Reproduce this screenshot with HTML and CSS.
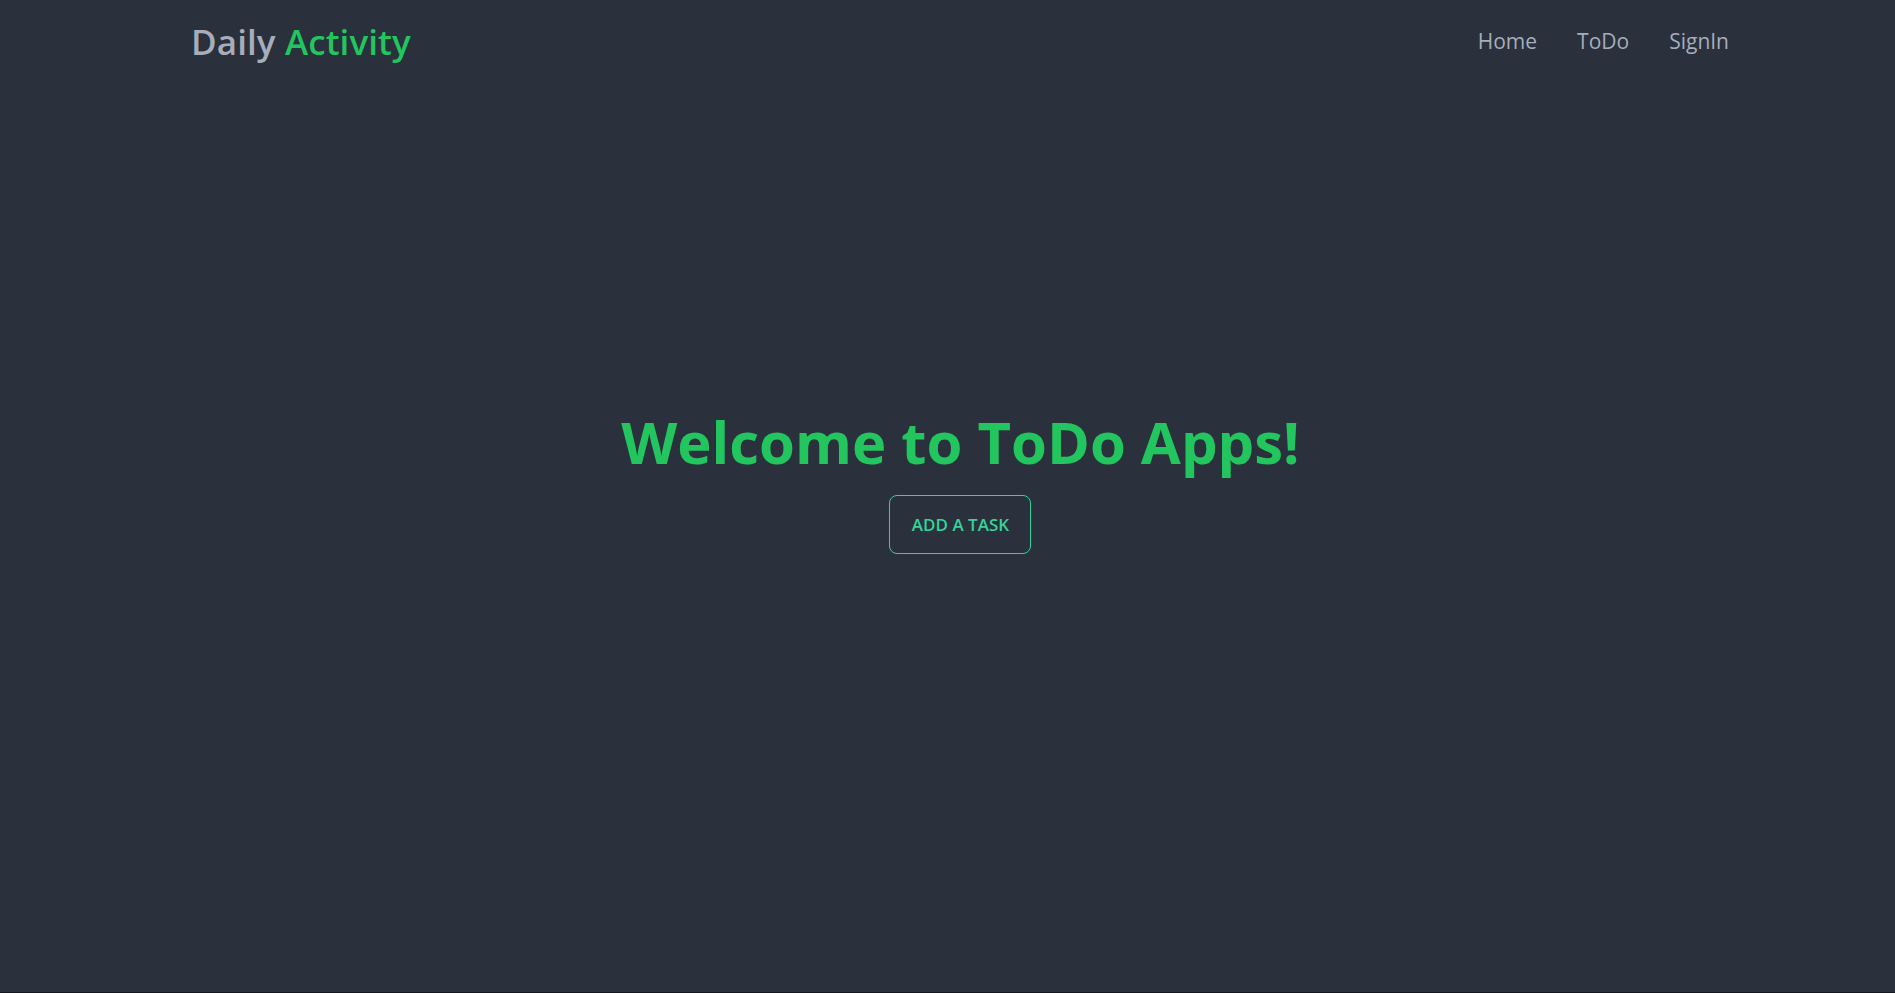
FILE: index.html
```html
<!DOCTYPE html>
<html lang="en">
<head>
<meta charset="utf-8">
<title>Daily Activity</title>
<link rel="stylesheet" href="styles.css">
</head>
<body>
<div class="page">
  <header class="navbar">
    <a class="brand" href="#"><span class="brand-daily">Daily</span> <span class="brand-activity">Activity</span></a>
    <nav class="menu">
      <a href="#" class="menu-item">Home</a>
      <a href="#" class="menu-item">ToDo</a>
      <a href="#" class="menu-item">SignIn</a>
    </nav>
  </header>
  <main class="hero">
    <div class="hero-content">
      <h1 class="hero-title">Welcome to ToDo Apps!</h1>
      <button class="btn-outline">ADD A TASK</button>
    </div>
  </main>
</div>
</body>
</html>
```

FILE: styles.css
```css
html, body {
  margin: 0;
  padding: 0;
}
body {
  background: #2a303c;
  font-family: "Open Sans", "Noto Sans", sans-serif;
  color: #a6adbb;
}
.page {
  height: 992px;
  border-bottom: 1px solid #14171d;
  display: flex;
  flex-direction: column;
}
.navbar {
  box-sizing: border-box;
  padding: 12px 166px 0 191px;
  display: flex;
  justify-content: space-between;
  align-items: center;
  height: 70px;
}
.brand {
  text-decoration: none;
  font-size: 35px;
  font-weight: 600;
  letter-spacing: 0.1px;
}
.brand-daily { color: #a6adbb; }
.brand-activity { color: #22c55e; }
.menu {
  display: flex;
  gap: 40px;
}
.menu-item {
  color: #a6adbb;
  text-decoration: none;
  font-size: 21px;
}
.hero {
  flex: 1;
  display: flex;
  justify-content: center;
  align-items: flex-start;
  padding-top: 340px;
  padding-left: 26px;
}
.hero-content {
  display: flex;
  flex-direction: column;
  align-items: center;
  gap: 21px;
}
.hero-title {
  margin: 0;
  font-size: 58px;
  font-weight: 700;
  color: #22c55e;
  line-height: 1.1;
}
.btn-outline {
  background: transparent;
  border: 1px solid #36d399;
  color: #36d399;
  border-radius: 8px;
  height: 59px;
  width: 142px;
  font-family: inherit;
  font-size: 17px;
  font-weight: 600;
  cursor: pointer;
}
```
